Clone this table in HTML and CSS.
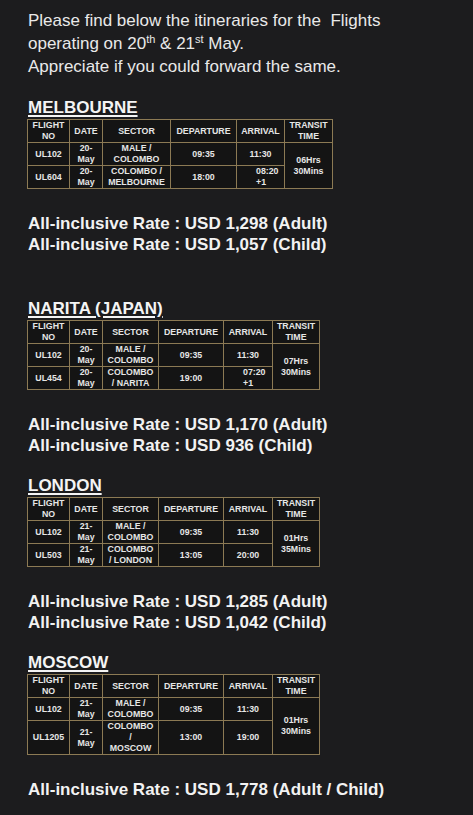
FILE: index.html
```html
<!DOCTYPE html>
<html lang="en">
<head>
<meta charset="utf-8">
<title>Flight itineraries</title>
<link rel="stylesheet" href="styles.css">
</head>
<body>
<main class="email">
  <p class="intro">Please find below the itineraries for the&nbsp; Flights<br>operating on 20<sup>th</sup> &amp; 21<sup>st</sup> May.<br>Appreciate if you could forward the same.</p>

  <section class="route">
    <h2 class="city">MELBOURNE</h2>
    <table class="itin itin-wide">
      <colgroup>
        <col class="c-flight"><col class="c-date"><col class="c-sector"><col class="c-dep"><col class="c-arr"><col class="c-tr">
      </colgroup>
      <tr><th>FLIGHT<br>NO</th><th>DATE</th><th>SECTOR</th><th>DEPARTURE</th><th>ARRIVAL</th><th>TRANSIT<br>TIME</th></tr>
      <tr><td>UL102</td><td>20-<br>May</td><td>MALE /<br>COLOMBO</td><td>09:35</td><td>11:30</td><td rowspan="2">06Hrs<br>30Mins</td></tr>
      <tr><td>UL604</td><td>20-<br>May</td><td>COLOMBO /<br>MELBOURNE</td><td>18:00</td><td class="next-day">08:20<br>+1</td></tr>
    </table>
    <p class="rates">All-inclusive Rate : USD 1,298 (Adult)<br>All-inclusive Rate : USD 1,057 (Child)</p>
  </section>

  <section class="route route-spaced">
    <h2 class="city">NARITA (JAPAN)</h2>
    <table class="itin">
      <colgroup>
        <col class="c-flight"><col class="c-date"><col class="c-sector"><col class="c-dep"><col class="c-arr"><col class="c-tr">
      </colgroup>
      <tr><th>FLIGHT<br>NO</th><th>DATE</th><th>SECTOR</th><th>DEPARTURE</th><th>ARRIVAL</th><th>TRANSIT<br>TIME</th></tr>
      <tr><td>UL102</td><td>20-<br>May</td><td>MALE /<br>COLOMBO</td><td>09:35</td><td>11:30</td><td rowspan="2">07Hrs<br>30Mins</td></tr>
      <tr><td>UL454</td><td>20-<br>May</td><td>COLOMBO<br>/ NARITA</td><td>19:00</td><td class="next-day">07:20<br>+1</td></tr>
    </table>
    <p class="rates">All-inclusive Rate : USD 1,170 (Adult)<br>All-inclusive Rate : USD 936 (Child)</p>
  </section>

  <section class="route">
    <h2 class="city">LONDON</h2>
    <table class="itin">
      <colgroup>
        <col class="c-flight"><col class="c-date"><col class="c-sector"><col class="c-dep"><col class="c-arr"><col class="c-tr">
      </colgroup>
      <tr><th>FLIGHT<br>NO</th><th>DATE</th><th>SECTOR</th><th>DEPARTURE</th><th>ARRIVAL</th><th>TRANSIT<br>TIME</th></tr>
      <tr><td>UL102</td><td>21-<br>May</td><td>MALE /<br>COLOMBO</td><td>09:35</td><td>11:30</td><td rowspan="2">01Hrs<br>35Mins</td></tr>
      <tr><td>UL503</td><td>21-<br>May</td><td>COLOMBO<br>/ LONDON</td><td>13:05</td><td>20:00</td></tr>
    </table>
    <p class="rates">All-inclusive Rate : USD 1,285 (Adult)<br>All-inclusive Rate : USD 1,042 (Child)</p>
  </section>

  <section class="route">
    <h2 class="city">MOSCOW</h2>
    <table class="itin">
      <colgroup>
        <col class="c-flight"><col class="c-date"><col class="c-sector"><col class="c-dep"><col class="c-arr"><col class="c-tr">
      </colgroup>
      <tr><th>FLIGHT<br>NO</th><th>DATE</th><th>SECTOR</th><th>DEPARTURE</th><th>ARRIVAL</th><th>TRANSIT<br>TIME</th></tr>
      <tr><td>UL102</td><td>21-<br>May</td><td>MALE /<br>COLOMBO</td><td>09:35</td><td>11:30</td><td rowspan="2">01Hrs<br>30Mins</td></tr>
      <tr><td>UL1205</td><td>21-<br>May</td><td>COLOMBO<br>/<br>MOSCOW</td><td>13:00</td><td>19:00</td></tr>
    </table>
    <p class="rates">All-inclusive Rate : USD 1,778 (Adult / Child)</p>
  </section>
</main>
</body>
</html>
```

FILE: styles.css
```css
html {
  background: #1c1c1e;
}

body {
  margin: 0;
  background: #1c1c1e;
  color: #ececec;
  font-family: "Liberation Sans", Arial, Helvetica, sans-serif;
}

.email {
  padding: 9px 0 20px 28px;
}

.intro {
  margin: 0;
  font-size: 17px;
  line-height: 23px;
  color: #e9e9e9;
}

.intro sup {
  font-size: 11px;
  line-height: 0;
  vertical-align: 6px;
}

.route {
  margin-top: 20px;
}

.route-spaced {
  margin-top: 44px;
}

.city {
  margin: 0;
  font-size: 17px;
  line-height: 20px;
  font-weight: bold;
  text-decoration: underline;
  text-decoration-thickness: 1.5px;
  text-underline-offset: 2px;
  color: #f4f4f4;
}

.itin {
  margin: 1px 0 0 -1px;
  border-collapse: collapse;
  table-layout: fixed;
  width: 292px;
  background: #141414;
  border: 1px solid #8c7a54;
}

.itin-wide {
  width: 305px;
}

.c-flight { width: 42px; }
.c-date { width: 33px; }
.c-sector { width: 56px; }
.c-dep { width: 65px; }
.c-arr { width: 49px; }
.c-tr { width: 47px; }

.itin-wide .c-sector { width: 68px; }
.itin-wide .c-dep { width: 66px; }
.itin-wide .c-arr { width: 48px; }
.itin-wide .c-tr { width: 48px; }

.itin th,
.itin td {
  border: 1px solid #8c7a54;
  padding: 0;
  font-size: 8.8px;
  line-height: 11px;
  font-weight: bold;
  text-align: center;
  vertical-align: middle;
  white-space: nowrap;
  color: #e6e6e6;
}

.itin td.next-day {
  text-align: left;
  padding-left: 19px;
}

.rates {
  margin: 24px 0 0;
  font-size: 17px;
  line-height: 21px;
  font-weight: bold;
  color: #f2f2f2;
}
```
